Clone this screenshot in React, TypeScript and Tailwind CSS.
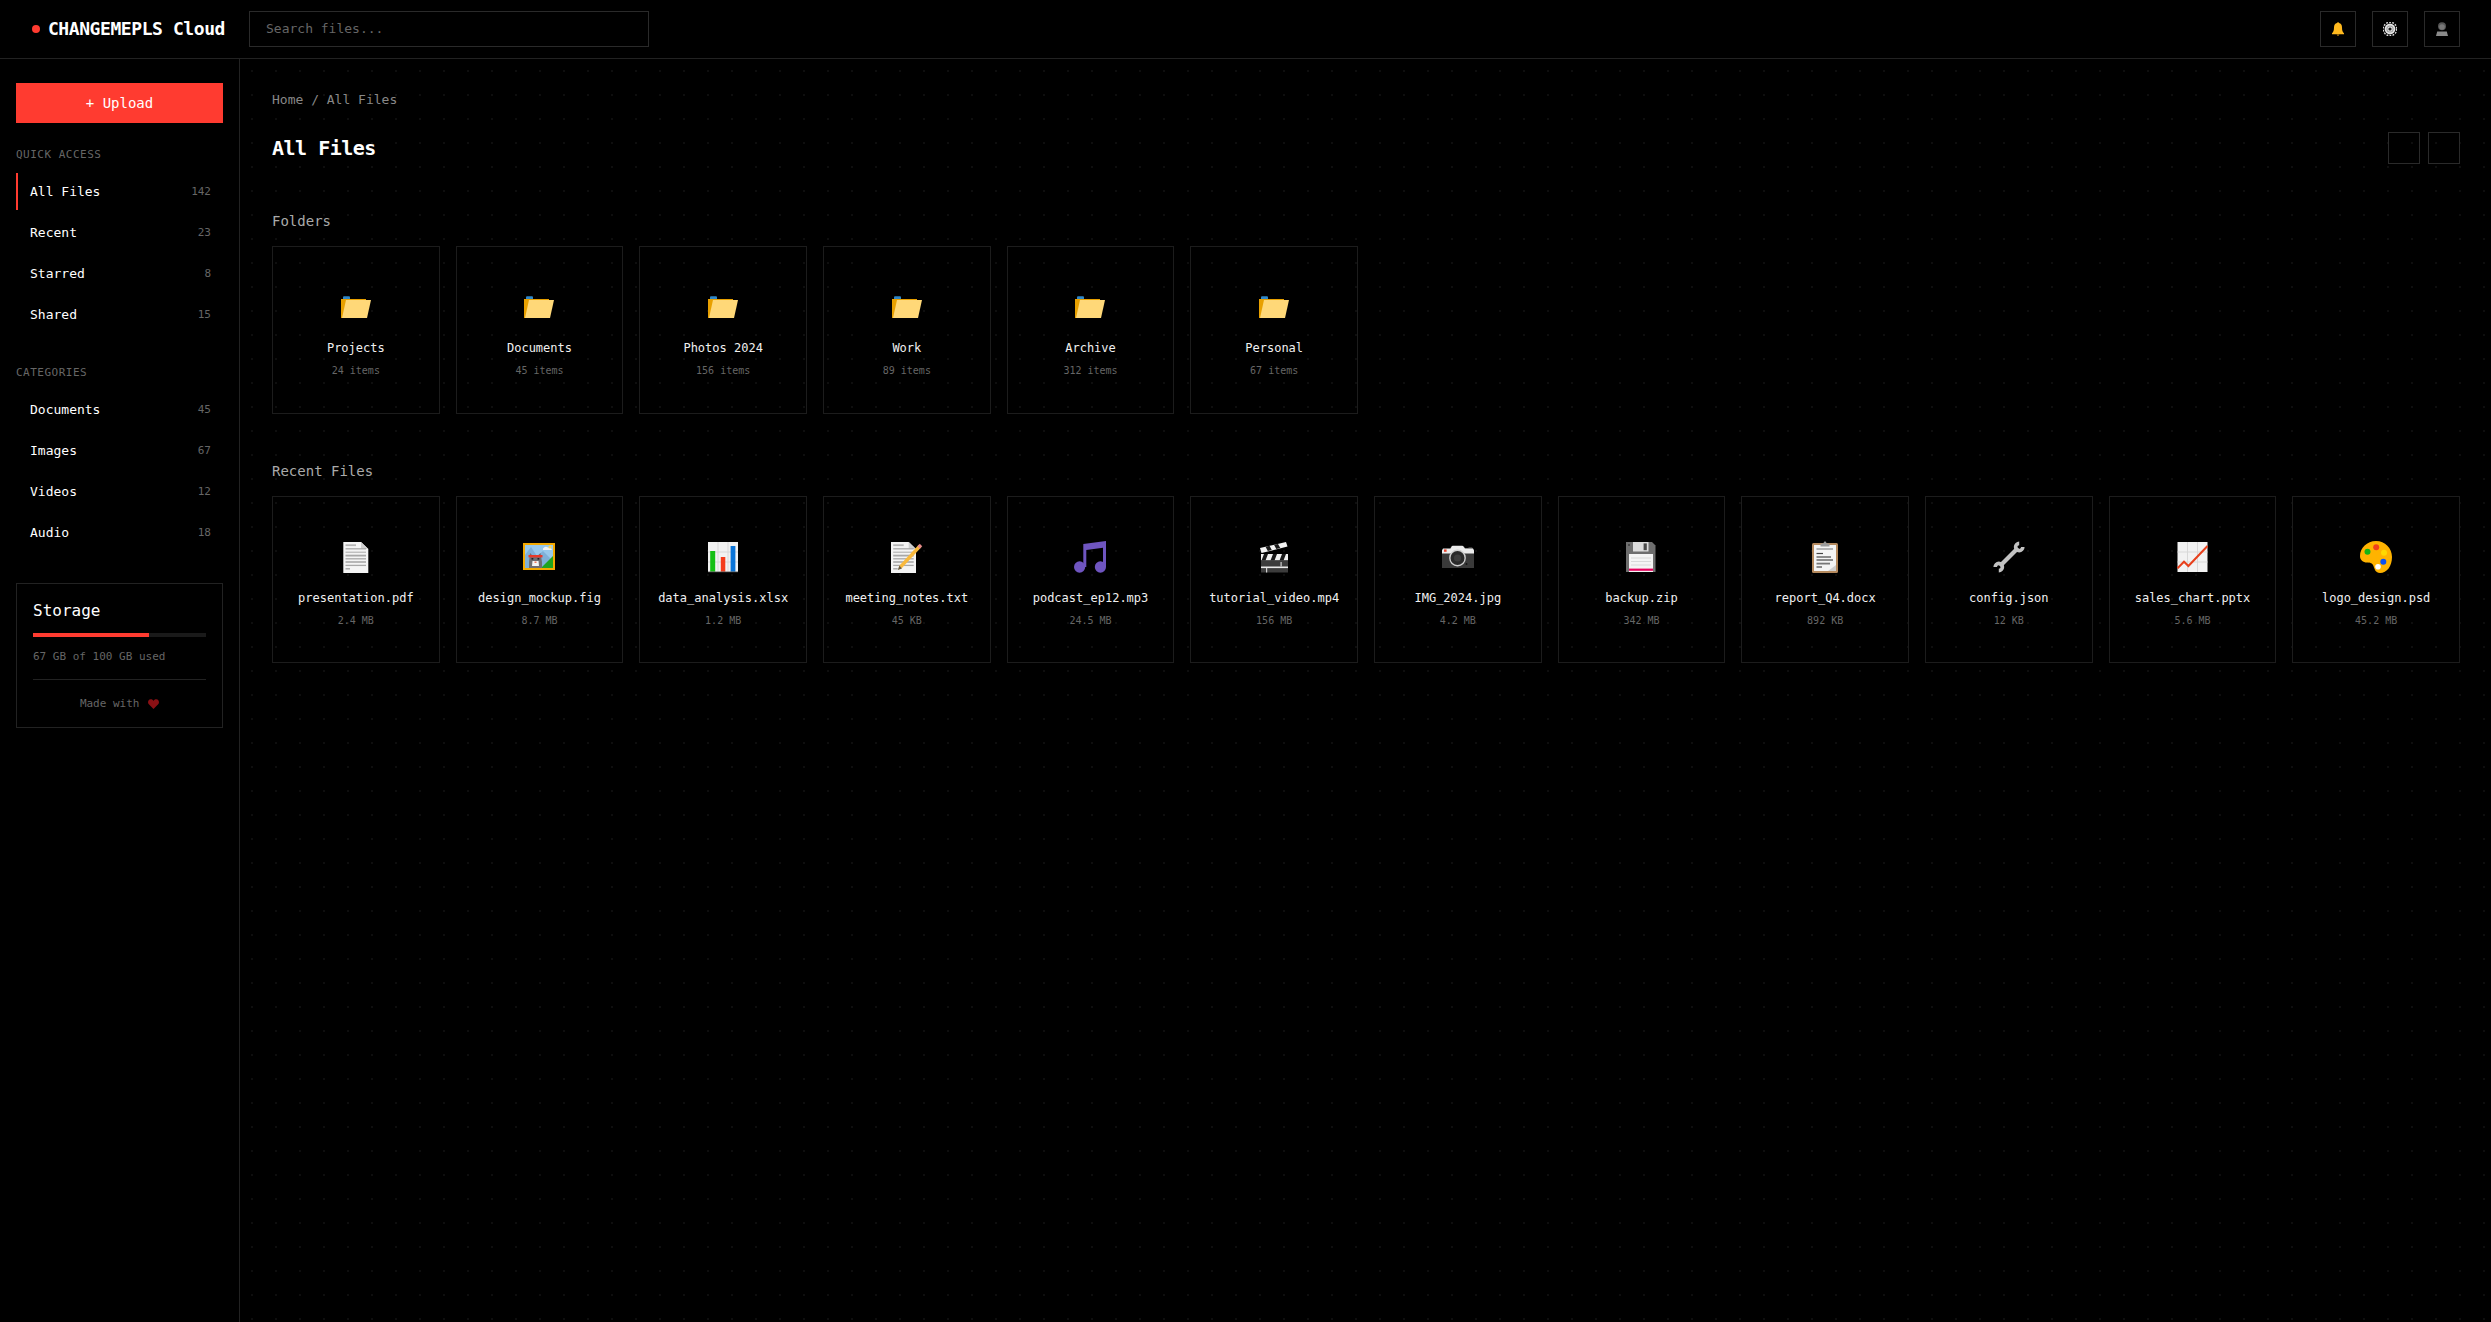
const mono = "font-['DejaVu_Sans_Mono','Liberation_Mono',monospace]";

const quick = [
  { name: "All Files", count: "142", active: true },
  { name: "Recent", count: "23" },
  { name: "Starred", count: "8" },
  { name: "Shared", count: "15" },
];
const categories = [
  { name: "Documents", count: "45" },
  { name: "Images", count: "67" },
  { name: "Videos", count: "12" },
  { name: "Audio", count: "18" },
];
const folders = [
  ["Projects", "24 items"],
  ["Documents", "45 items"],
  ["Photos 2024", "156 items"],
  ["Work", "89 items"],
  ["Archive", "312 items"],
  ["Personal", "67 items"],
];

function Svg({ children, size = 32 }: { children: React.ReactNode; size?: number }) {
  return (
    <svg width={size} height={size} viewBox="0 0 32 32" className="block">
      {children}
    </svg>
  );
}

const pageLines = (
  <>
    <path d="M3.3 1H21L28.3 8V32H3.3Z" fill="#f4f4f4" />
    <path d="M21 1L28.3 8H21Z" fill="#cfcfcf" />
    <g stroke="#a8a8a8" strokeWidth="1.3">
      <path d="M5.5 4.2H16" stroke="#b5b5b5" strokeWidth="1.8" />
      <path d="M5.5 7.8H26" />
      <path d="M5.5 11.2H26" strokeWidth="1" />
      <path d="M5.5 14.6H26" strokeWidth="1.8" />
      <path d="M5.5 17.8H26" />
      <path d="M5.5 21H26" strokeWidth="1.6" />
      <path d="M5.5 24.4H26" />
      <path d="M5.5 27.8H10" strokeWidth="1.4" />
    </g>
  </>
);

const Pdf = () => <Svg>{pageLines}</Svg>;

const Picture = () => (
  <Svg>
    <rect x="0" y="2" width="32" height="27" fill="#f4a900" />
    <rect x="2" y="4" width="28" height="23" fill="#98c9ec" />
    <path d="M2 27V14L8 6L14 15L20 10L30 20V27Z" fill="#7fb0d8" />
    <path d="M20 7.5Q22 4.8 25 6.5Q28.5 6 29 9H20Z" fill="#f4f4f4" />
    <circle cx="27" cy="6" r="1.6" fill="#f9d65c" />
    <path d="M18 27L30 15V27Z" fill="#1ea41e" />
    <path d="M7 12L9.5 14.5H15L17.5 12L19 21V27H6V21Z" fill="#6e6e73" />
    <rect x="5.5" y="14" width="14" height="2.4" fill="#e83a2a" />
    <path d="M9.5 20H15.5L16 25H9Z" fill="#f4f4f4" />
    <rect x="11.5" y="20.5" width="2" height="1.4" fill="#e86a50" />
    <rect x="8.5" y="17" width="1.8" height="1.6" fill="#222" />
    <rect x="14.5" y="17" width="1.8" height="1.6" fill="#222" />
  </Svg>
);

const chartBg = (x: number) => (
  <>
    <rect x={x} y="1" width="30" height="30" fill="#f2f2f2" />
    <g stroke="#d8d8d8" strokeWidth="1">
      <path d={`M${x + 10} 1V31M${x + 20} 1V31M${x} 11H${x + 30}M${x} 21H${x + 30}`} />
    </g>
  </>
);

const BarChart = () => (
  <Svg>
    {chartBg(1)}
    <rect x="3.2" y="10" width="5" height="21" fill="#14c014" />
    <rect x="13.8" y="16" width="4.5" height="15" fill="#f43c1c" />
    <rect x="23.6" y="5" width="4.8" height="26" fill="#0a74d8" />
    <rect x="1" y="30.4" width="30" height="0.8" fill="#777" />
  </Svg>
);

const Notes = () => (
  <Svg>
    <g transform="translate(-3.3 0)">{pageLines}</g>
    <path d="M9.5 26L29 5" stroke="#f9b93c" strokeWidth="3.4" />
    <path d="M27.6 6.5L30 4" stroke="#e58a8a" strokeWidth="3.4" />
    <path d="M6.8 29L8.4 24.6L11 27.4Z" fill="#6b5a3a" />
  </Svg>
);

const Music = () => (
  <Svg>
    <path d="M9.3 3L32 0V26H29V6.8L12.3 9V26H9.3Z" fill="#6f55c0" />
    <ellipse cx="5.6" cy="26" rx="5.6" ry="5.8" fill="#6f55c0" />
    <ellipse cx="26.4" cy="26" rx="5.6" ry="5.8" fill="#6f55c0" />
  </Svg>
);

const Clapper = () => (
  <Svg>
    <path d="M2 7L28 1L29.5 5.6L3.5 12Z" fill="#f2f2f2" />
    <path d="M7.5 5.7L11.5 4.8L13.8 9L9.8 10ZM16 3.8L20 2.9L22.3 7L18.3 8Z" fill="#1a1a1a" />
    <rect x="3" y="13" width="27" height="6.5" fill="#f2f2f2" />
    <path d="M6 13H10L7.5 19.5H3.5ZM15 13H19L16.5 19.5H12.5ZM24 13H28L25.5 19.5H21.5Z" fill="#1a1a1a" />
    <rect x="3" y="19.5" width="27" height="12" fill="#3c3c3c" />
    <rect x="3" y="25.5" width="27" height="1.6" fill="#e8e8e8" />
    <rect x="22.5" y="21" width="1.2" height="4.5" fill="#cfcfcf" />
    <rect x="8" y="27" width="1.2" height="4.5" fill="#cfcfcf" />
  </Svg>
);

const Camera = () => (
  <Svg>
    <path d="M1 8H8L9 5.5L11 4H20L22 5.5L23 7H26L27 6H30L31 8L32 9V27H0V9Z" fill="#3a3a3a" />
    <path d="M0 9.5L1 7.5H8.5L10 5H21L23 7.5H31L32 9.5V12.5H0Z" fill="#ebebeb" />
    <rect x="2" y="8.4" width="2.6" height="2.4" fill="#e8442e" />
    <circle cx="15.5" cy="17" r="8.4" fill="#cfcfcf" />
    <circle cx="15.5" cy="17" r="7" fill="#2a2a2a" />
    <circle cx="15.5" cy="17" r="3.6" fill="#3d3d3d" />
    <circle cx="24.5" cy="23" r="1" fill="#151515" />
  </Svg>
);

const Floppy = () => (
  <Svg>
    <path d="M1 1H27L30.5 4.5V31H1Z" fill="#6e6e6e" />
    <rect x="8" y="1" width="15.5" height="9.5" fill="#dcdcdc" />
    <rect x="18.6" y="2.4" width="3.2" height="6.8" fill="#4a4a4a" />
    <circle cx="4" cy="4" r="1" fill="#3d3d3d" />
    <rect x="4" y="13" width="24" height="18" fill="#f4f4f4" />
    <path d="M6 17H26M6 20.5H26M6 24H26" stroke="#d8d8d8" strokeWidth="1" />
    <rect x="4" y="27.6" width="24" height="2.2" fill="#e6005c" />
  </Svg>
);

const Clipboard = () => (
  <Svg>
    <rect x="3" y="2" width="26" height="30" rx="1.5" fill="#b58a5e" />
    <rect x="5" y="4" width="22" height="26" fill="#f4f4f4" />
    <path d="M19 30L27 24V30Z" fill="#cfcfcf" />
    <path d="M11.5 5.5V2.5H14L16 0L18 2.5H20.5V5.5Z" fill="#9a9a9a" />
    <g stroke="#444" strokeWidth="1.2">
      <path d="M7.5 8H24" stroke="#888" />
      <path d="M7.5 12.5H14" />
      <path d="M7.5 16H22" />
      <path d="M7.5 19H24" />
      <path d="M7.5 22.6H21" stroke="#777" strokeWidth="1.8" />
      <path d="M7.5 26H13" />
    </g>
  </Svg>
);

const Wrench = () => (
  <Svg>
    <g fill="none" stroke="#c2c2c2">
      <path d="M7 25L25 7" strokeWidth="4.2" />
      <path d="M26.2 2.4A3.6 3.6 0 1 0 29.8 6" strokeWidth="3.6" />
      <path d="M5.8 29.6A3.6 3.6 0 1 0 2.2 26" strokeWidth="3.6" />
    </g>
  </Svg>
);

const SalesChart = () => (
  <Svg>
    {chartBg(1.5)}
    <path d="M1.5 27.3L8 20.7L12.4 25L31.5 5" fill="none" stroke="#e8401c" strokeWidth="2" />
  </Svg>
);

const Palette = () => (
  <Svg>
    <path
      d="M16 0C25 0 32 7 32 16C32 25 27 32 20 32C15.5 32 14.5 28 13.5 25C12.5 22 10 21.5 7 21.5C3 21.5 0 19 0 15C0 7 7 0 16 0Z"
      fill="#ffb300"
    />
    <circle cx="7.5" cy="10.7" r="3" fill="#14b414" />
    <circle cx="16.2" cy="6.3" r="3" fill="#f0401c" />
    <circle cx="24" cy="11.7" r="3" fill="#ffd800" />
    <circle cx="23.3" cy="20.7" r="3" fill="#0a50f0" />
    <circle cx="18" cy="25.7" r="2.8" fill="#ffffff" />
  </Svg>
);

const Folder = () => (
  <Svg>
    <rect x="3" y="5.2" width="7" height="4" rx="1" fill="#2e86c8" />
    <path d="M1 8H26V27H1Z" fill="#e8a000" />
    <path d="M6 9H31L27 27H2Z" fill="#ffd878" />
  </Svg>
);

const Bell = () => (
  <svg width="14" height="14" viewBox="0 0 14 14" className="block">
    <path d="M7 0.2C7.6 0.2 8 0.6 8 1.1C10 1.6 11 3.2 11 5.4C11 8.2 11.6 10 13 11.2V12.2H1V11.2C2.4 10 3 8.2 3 5.4C3 3.2 4 1.6 6 1.1C6 0.6 6.4 0.2 7 0.2Z" fill="#ffb91e" />
    <path d="M5.6 12.4H8.4L7.6 13.8H6.4Z" fill="#c98a10" />
  </svg>
);

const Gear = () => (
  <svg width="14" height="14" viewBox="0 0 14 14" className="block">
    <circle cx="7" cy="7" r="6.8" fill="none" stroke="#dedede" strokeWidth="1.4" strokeDasharray="1.8 1.3" />
    <circle cx="7" cy="7" r="5.4" fill="#e4e4e4" />
    <circle cx="7" cy="7" r="3.6" fill="#999" />
    <circle cx="7" cy="7" r="2.6" fill="#e4e4e4" />
    <circle cx="7" cy="7" r="1.6" fill="#1a1a1a" />
  </svg>
);

const Person = () => (
  <svg width="14" height="14" viewBox="0 0 14 14" className="block">
    <circle cx="7" cy="4.2" r="4" fill="#555" />
    <circle cx="7" cy="5" r="2.8" fill="#777" />
    <path d="M2.2 9.4H11.8L13 14H1Z" fill="#8a8a8a" />
  </svg>
);

const files: [() => React.ReactNode, string, string][] = [
  [Pdf, "presentation.pdf", "2.4 MB"],
  [Picture, "design_mockup.fig", "8.7 MB"],
  [BarChart, "data_analysis.xlsx", "1.2 MB"],
  [Notes, "meeting_notes.txt", "45 KB"],
  [Music, "podcast_ep12.mp3", "24.5 MB"],
  [Clapper, "tutorial_video.mp4", "156 MB"],
  [Camera, "IMG_2024.jpg", "4.2 MB"],
  [Floppy, "backup.zip", "342 MB"],
  [Clipboard, "report_Q4.docx", "892 KB"],
  [Wrench, "config.json", "12 KB"],
  [SalesChart, "sales_chart.pptx", "5.6 MB"],
  [Palette, "logo_design.psd", "45.2 MB"],
];

function NavItem({ name, count, active }: { name: string; count: string; active?: boolean }) {
  return (
    <div
      className={`flex h-[37px] items-center justify-between border-l-2 pl-3 pr-3 ${
        active ? "border-[#ff3b30]" : "border-transparent"
      }`}
    >
      <span className="text-[13px] leading-[17px] text-white">{name}</span>
      <span className="text-[11px] leading-[15px] text-[#666666]">{count}</span>
    </div>
  );
}

function SideHeading({ children }: { children: string }) {
  return (
    <div className="mb-2.5 text-[11px] leading-[16px] tracking-[0.5px] text-[#666666] uppercase">{children}</div>
  );
}

function Card({ icon, name, sub }: { icon: React.ReactNode; name: string; sub: string }) {
  return (
    <div className="flex aspect-square flex-col items-center justify-center border border-[#1c1c1c]">
      <div className="mb-2 flex h-12 items-center justify-center">{icon}</div>
      <div className="mb-[7px] text-[12px] leading-[18px] whitespace-nowrap text-[#f0f0f0]">{name}</div>
      <div className="mb-[-1px] text-[10px] leading-[14px] whitespace-nowrap text-[#666666]">{sub}</div>
    </div>
  );
}

export default function App() {
  return (
    <div className={`flex h-screen flex-col bg-black text-white ${mono}`}>
      <header className="flex h-[59px] shrink-0 items-center justify-between border-b border-[#222222] bg-black pr-[31px] pl-8">
        <div className="flex items-center">
          <div className="flex w-[193px] items-center gap-2">
            <span className="h-2 w-2 rounded-full bg-[#ff3b30]" />
            <span className="text-[18px] leading-6 font-bold tracking-[-0.42px] whitespace-nowrap">CHANGEMEPLS Cloud</span>
          </div>
          <div className="ml-6 flex h-9 w-[400px] items-center border border-[#2a2a2a] px-4 text-[13px] text-[#666666]">
            Search files...
          </div>
        </div>
        <div className="flex items-center gap-4">
          {[<Bell key="b" />, <Gear key="g" />, <Person key="p" />].map((icon) => (
            <div key={icon.key} className="flex h-9 w-9 items-center justify-center border border-[#2a2a2a]">
              {icon}
            </div>
          ))}
        </div>
      </header>
      <div className="flex min-h-0 flex-1">
        <aside className="w-60 shrink-0 border-r border-[#222222] bg-black px-4 pt-6">
          <div className="mb-6 flex h-10 items-center justify-center bg-[#ff3b30] pt-px text-[14px] text-white">
            + Upload
          </div>
          <div className="mb-8">
            <SideHeading>Quick Access</SideHeading>
            <div className="flex flex-col gap-1">
              {quick.map((q) => (
                <NavItem key={q.name} {...q} />
              ))}
            </div>
          </div>
          <div className="mb-8">
            <SideHeading>Categories</SideHeading>
            <div className="flex flex-col gap-1">
              {categories.map((q) => (
                <NavItem key={q.name} {...q} />
              ))}
            </div>
          </div>
          <div className="border border-[#222222] p-4">
            <div className="mb-3 text-[16px] leading-[21px] text-white">Storage</div>
            <div className="mb-3 h-1 bg-[#1a1a1a]">
              <div className="h-1 w-[67%] bg-[#ff3b30]" />
            </div>
            <div className="text-[11px] leading-[15px] text-[#666666]">67 GB of 100 GB used</div>
            <div className="mt-[15px] flex items-center justify-center gap-[2px] border-t border-[#222222] pt-4 text-[11px] leading-[15px] text-[#666666]">
              <span>Made with&nbsp;</span>
              <svg width="11" height="10" viewBox="0 0 11 10" className="block">
                <path d="M5.5 10L0.6 5C-0.6 3.4 0.1 0.6 2.6 0.3C4 0.2 5 0.9 5.5 1.9C6 0.9 7 0.2 8.4 0.3C10.9 0.6 11.6 3.4 10.4 5Z" fill="#8a1014" />
              </svg>
            </div>
          </div>
        </aside>
        <main className="min-w-0 flex-1 bg-[radial-gradient(circle,#0e0e0e_1px,transparent_1px)] bg-[length:24px_24px] py-8 pr-[31px] pl-8">
          <div className="mb-[23px] text-[13px] leading-[18px] text-[#888888]">Home / All Files</div>
          <div className="mb-12 flex h-8 items-center justify-between">
            <h1 className="text-[20px] leading-7 font-bold tracking-[-0.5px]">All Files</h1>
            <div className="flex gap-2">
              <div className="h-8 w-8 border border-[#2a2a2a]" />
              <div className="h-8 w-8 border border-[#2a2a2a]" />
            </div>
          </div>
          <div className="mb-12">
            <h2 className="mb-4 text-[14px] leading-[18px] text-[#aaaaaa]">Folders</h2>
            <div className="grid grid-cols-[repeat(auto-fill,minmax(160px,1fr))] gap-4">
              {folders.map(([n, s]) => (
                <Card key={n} icon={<Folder />} name={n} sub={s} />
              ))}
            </div>
          </div>
          <div>
            <h2 className="mb-4 text-[14px] leading-[18px] text-[#aaaaaa]">Recent Files</h2>
            <div className="grid grid-cols-[repeat(auto-fill,minmax(160px,1fr))] gap-4">
              {files.map(([Icon, n, s]) => (
                <Card key={n} icon={<Icon />} name={n} sub={s} />
              ))}
            </div>
          </div>
        </main>
      </div>
    </div>
  );
}
